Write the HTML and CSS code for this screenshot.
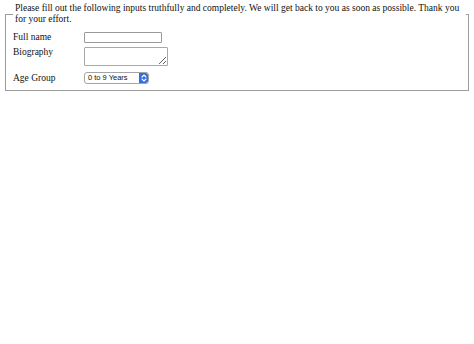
FILE: index.html
```html
<!DOCTYPE html>
<html>
<head>
<meta charset="utf-8">
<link rel="stylesheet" href="styles.css">
</head>
<body>
<form class="form">
  <fieldset class="box">
    <legend class="intro">Please fill out the following inputs truthfully and completely. We will get back to you as soon as possible. Thank you for your effort.</legend>
    <div class="row row-name">
      <label class="label" for="name">Full name</label>
      <input class="text" id="name" type="text">
    </div>
    <div class="row row-bio">
      <label class="label" for="bio">Biography</label>
      <textarea class="area" id="bio"></textarea>
    </div>
    <div class="row row-age">
      <label class="label" for="age">Age Group</label>
      <span class="select-wrap">
        <select class="select" id="age">
          <option>0 to 9 Years</option>
          <option>10 to 19 Years</option>
          <option>20 to 29 Years</option>
        </select>
        <span class="select-btn">
          <svg width="6" height="8" viewBox="0 0 6 8"><path d="M1 3 L3 1 L5 3 M1 5 L3 7 L5 5" fill="none" stroke="#fff" stroke-width="1.1" stroke-linecap="round" stroke-linejoin="round"/></svg>
        </span>
      </span>
    </div>
  </fieldset>
</form>
</body>
</html>
```
FILE: styles.css
```css
html, body {
  margin: 0;
  padding: 0;
  background: #fff;
}
body {
  font-family: "Liberation Serif", "Times New Roman", serif;
  font-size: 9.5px;
  line-height: 11px;
  color: #111;
}
.form {
  padding: 3px 5px 0 5px;
}
.box {
  margin: 0;
  border: 1px solid #9c9c9c;
  padding: 7px 2px 6px 7px;
  box-sizing: border-box;
  width: 464px;
}
.intro {
  padding: 0 2px;
  margin-left: 0;
  line-height: 11px;
}
.row {
  display: flex;
  align-items: flex-start;
}
.label {
  width: 71px;
  flex: none;
}
.row-name {
  align-items: center;
}
.row-bio {
  margin-top: 4px;
}
.row-age {
  margin-top: 6px;
  align-items: center;
}
.text {
  margin: 0;
  width: 78px;
  height: 11px;
  box-sizing: border-box;
  border: 1px solid #9a9a9a;
  border-radius: 1px;
  padding: 0 2px;
  font-size: 8px;
  background: #fff;
}
.area {
  margin: 0;
  width: 84px;
  height: 19px;
  box-sizing: border-box;
  border: 1px solid #a8a8a8;
  border-radius: 1px;
  padding: 1px 2px;
  font-size: 8px;
  resize: both;
  display: block;
}
.select-wrap {
  display: inline-flex;
  align-items: stretch;
  width: 65px;
  height: 12px;
  box-sizing: border-box;
  border: 1px solid #a4a4a4;
  border-radius: 3px;
  background: #fff;
  overflow: hidden;
}
.select {
  appearance: none;
  -webkit-appearance: none;
  border: 0;
  background: transparent;
  margin: 0;
  padding: 0 0 0 3px;
  flex: 1;
  min-width: 0;
  font-family: "Liberation Sans", Arial, sans-serif;
  font-size: 7.5px;
  line-height: 10px;
  height: 10px;
  color: #111;
  outline: none;
}
.select-btn {
  flex: none;
  width: 9px;
  background: #2f6fde;
  display: flex;
  align-items: center;
  justify-content: center;
  border-radius: 0 2px 2px 0;
}
```
